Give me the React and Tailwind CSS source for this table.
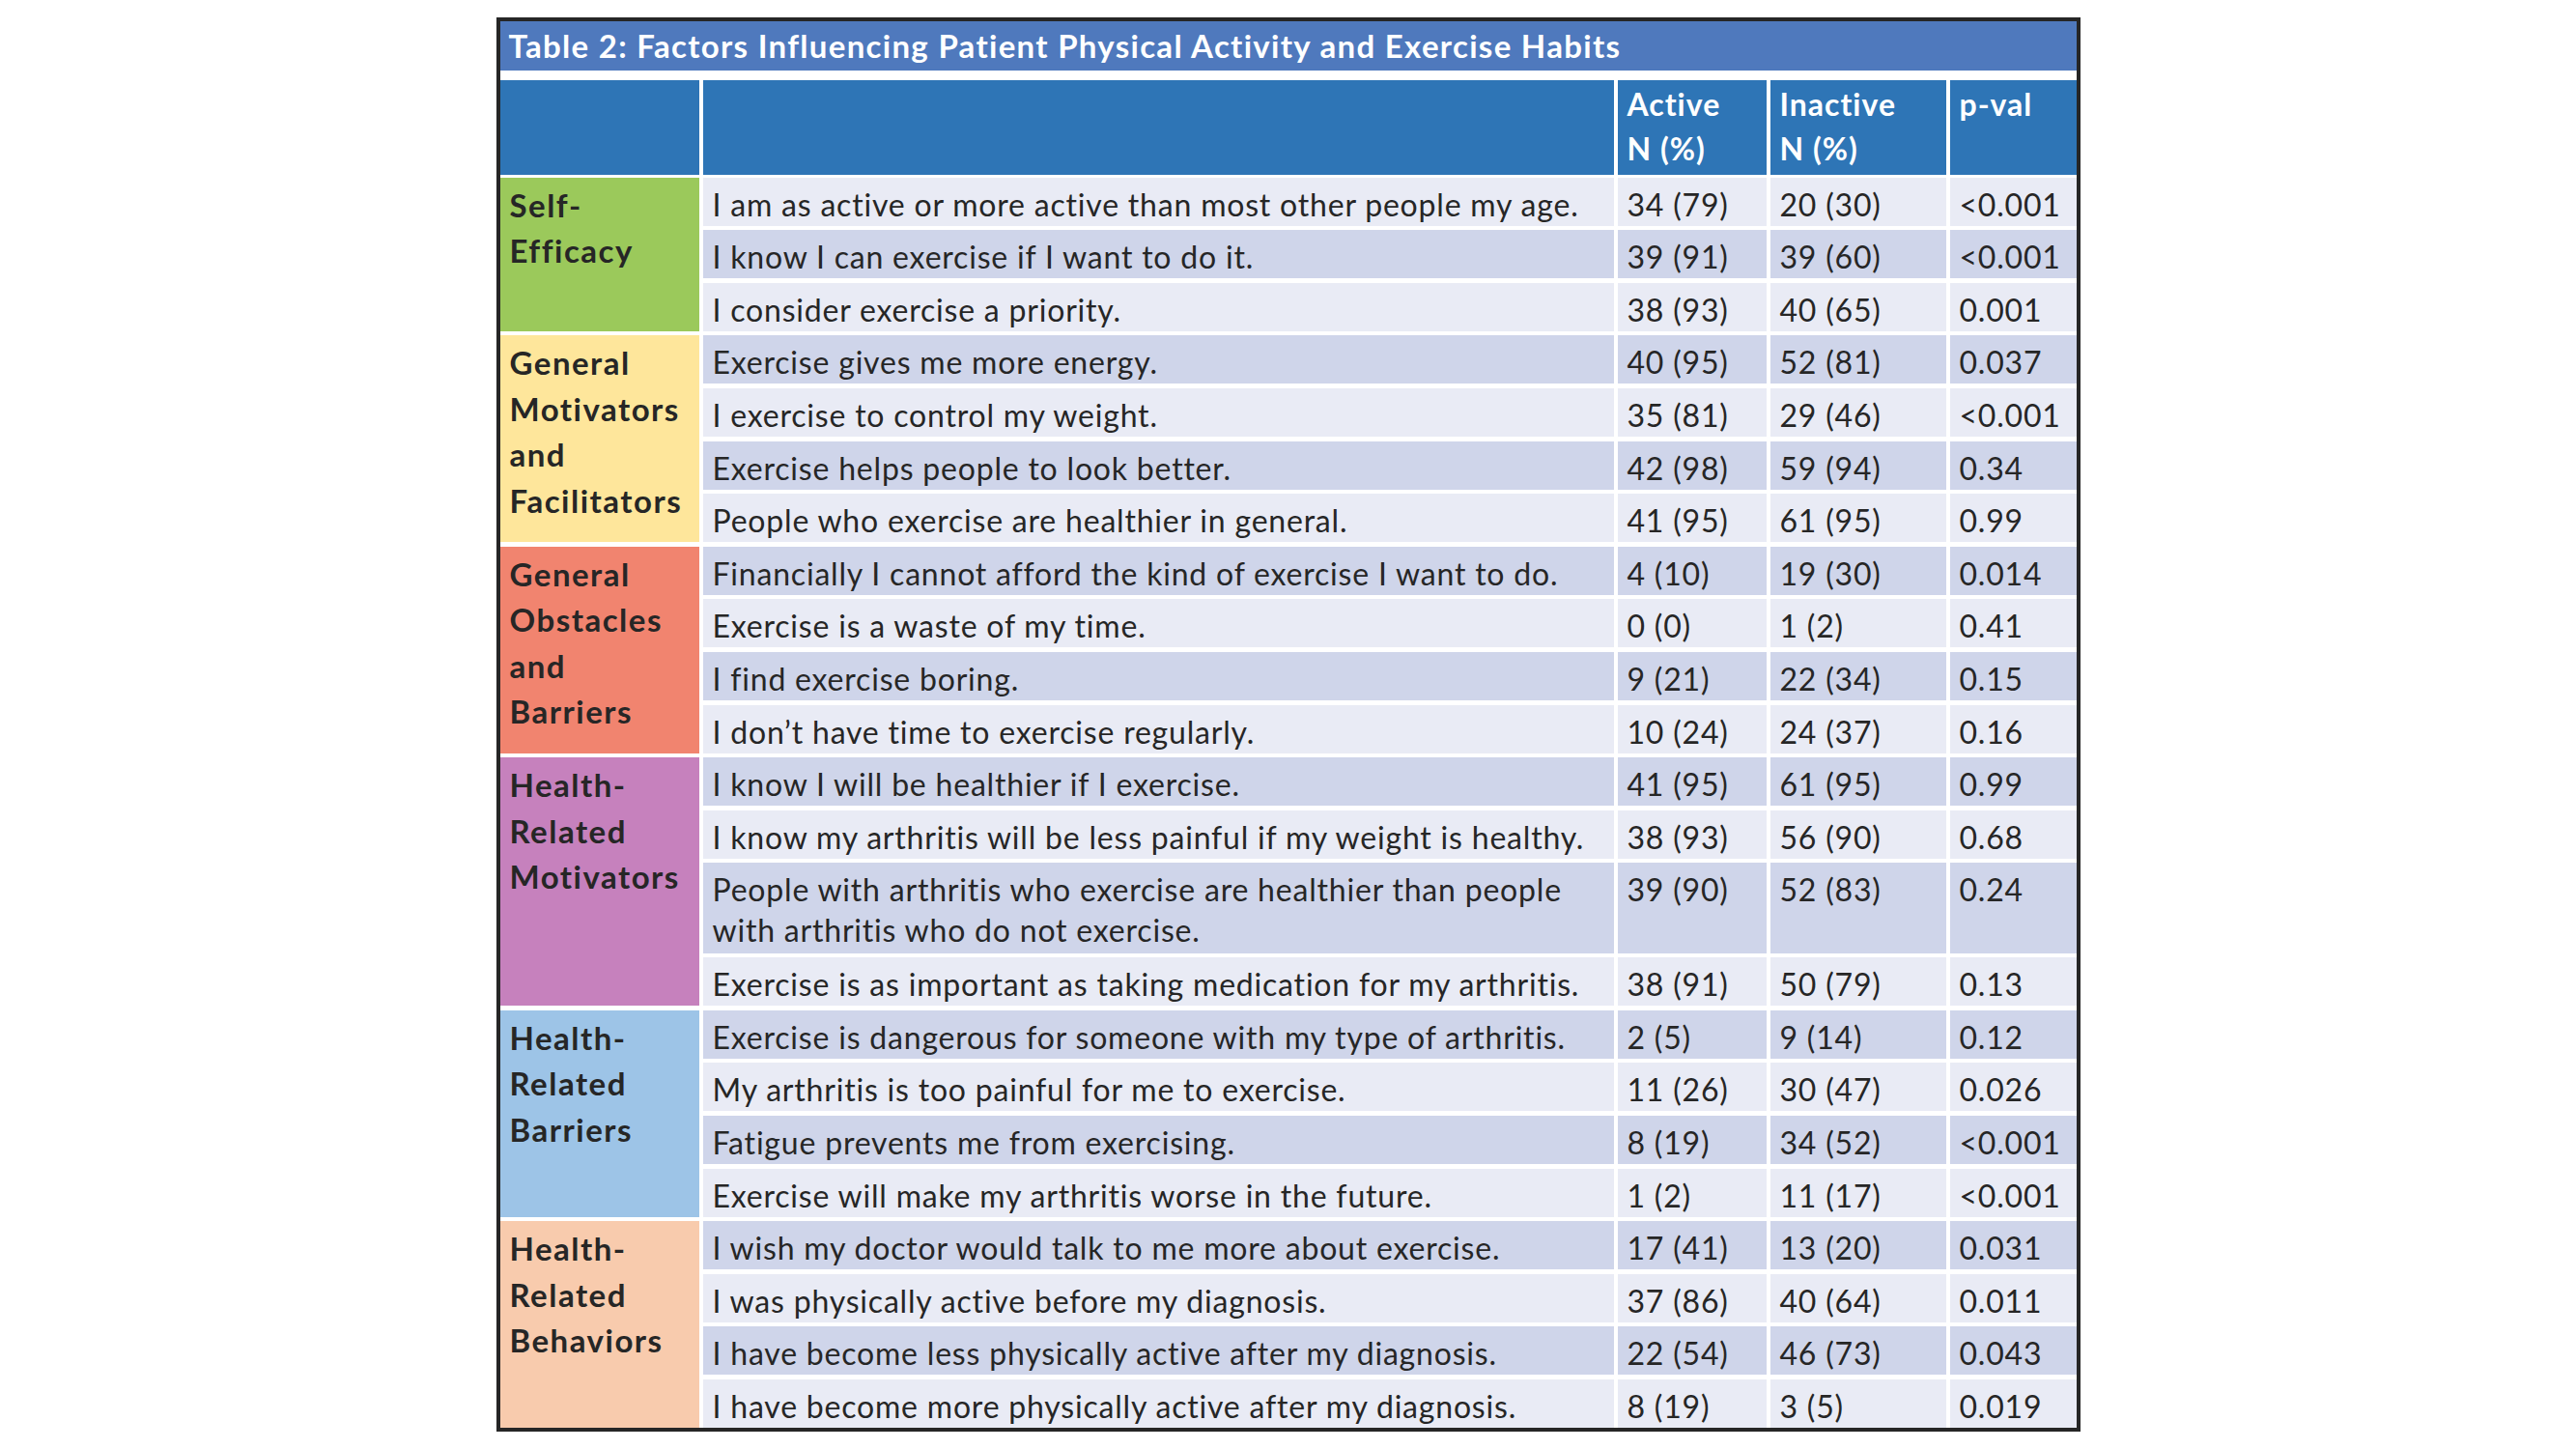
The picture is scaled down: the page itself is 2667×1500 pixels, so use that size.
import React from 'react';

const groups = [
  {
    label: ['Self-', 'Efficacy'],
    bg: 'bg-[#9bc95b]',
    span: 'row-span-3',
    rows: [
      ['I am as active or more active than most other people my age.', '34 (79)', '20 (30)', '<0.001'],
      ['I know I can exercise if I want to do it.', '39 (91)', '39 (60)', '<0.001'],
      ['I consider exercise a priority.', '38 (93)', '40 (65)', '0.001'],
    ],
  },
  {
    label: ['General', 'Motivators', 'and', 'Facilitators'],
    bg: 'bg-[#fee69b]',
    span: 'row-span-4',
    rows: [
      ['Exercise gives me more energy.', '40 (95)', '52 (81)', '0.037'],
      ['I exercise to control my weight.', '35 (81)', '29 (46)', '<0.001'],
      ['Exercise helps people to look better.', '42 (98)', '59 (94)', '0.34'],
      ['People who exercise are healthier in general.', '41 (95)', '61 (95)', '0.99'],
    ],
  },
  {
    label: ['General', 'Obstacles', 'and', 'Barriers'],
    bg: 'bg-[#f1846f]',
    span: 'row-span-4',
    rows: [
      ['Financially I cannot afford the kind of exercise I want to do.', '4 (10)', '19 (30)', '0.014'],
      ['Exercise is a waste of my time.', '0 (0)', '1 (2)', '0.41'],
      ['I find exercise boring.', '9 (21)', '22 (34)', '0.15'],
      ['I don\u2019t have time to exercise regularly.', '10 (24)', '24 (37)', '0.16'],
    ],
  },
  {
    label: ['Health-', 'Related', 'Motivators'],
    bg: 'bg-[#c681bd]',
    span: 'row-span-4',
    rows: [
      ['I know I will be healthier if I exercise.', '41 (95)', '61 (95)', '0.99'],
      ['I know my arthritis will be less painful if my weight is healthy.', '38 (93)', '56 (90)', '0.68'],
      [['People with arthritis who exercise are healthier than people', 'with arthritis who do not exercise.'], '39 (90)', '52 (83)', '0.24'],
      ['Exercise is as important as taking medication for my arthritis.', '38 (91)', '50 (79)', '0.13'],
    ],
  },
  {
    label: ['Health-', 'Related', 'Barriers'],
    bg: 'bg-[#9dc4e7]',
    span: 'row-span-4',
    rows: [
      ['Exercise is dangerous for someone with my type of arthritis.', '2 (5)', '9 (14)', '0.12'],
      ['My arthritis is too painful for me to exercise.', '11 (26)', '30 (47)', '0.026'],
      ['Fatigue prevents me from exercising.', '8 (19)', '34 (52)', '<0.001'],
      ['Exercise will make my arthritis worse in the future.', '1 (2)', '11 (17)', '<0.001'],
    ],
  },
  {
    label: ['Health-', 'Related', 'Behaviors'],
    bg: 'bg-[#f8cbad]',
    span: 'row-span-4',
    rows: [
      ['I wish my doctor would talk to me more about exercise.', '17 (41)', '13 (20)', '0.031'],
      ['I was physically active before my diagnosis.', '37 (86)', '40 (64)', '0.011'],
      ['I have become less physically active after my diagnosis.', '22 (54)', '46 (73)', '0.043'],
      ['I have become more physically active after my diagnosis.', '8 (19)', '3 (5)', '0.019'],
    ],
  },
];

const cols = 'grid grid-cols-[206px_943px_154px_182px_131px] gap-x-[4px]';
const headCell = 'bg-[#2e75b6] pl-[10px] pt-[2px] text-[32px] leading-[46px] font-bold tracking-[1px] text-white';

const App = () => {
  let rowIndex = 0;

  return (
    <div className="w-[2667px] h-[1500px] bg-white pt-[18px] [font-family:Lato,sans-serif]">
      <div className="mx-auto w-[1640px] border-[4px] border-[#262626] bg-white">
        <div className="h-[51px] bg-[#4f79bd] pl-[9px] pt-[4px] text-[33px] leading-[42px] font-bold tracking-[1.3px] text-white whitespace-nowrap">
          Table 2: Factors Influencing Patient Physical Activity and Exercise Habits
        </div>

        {/* header row */}
        <div className={`${cols} mt-[10px] h-[98px]`}>
          <div className="bg-[#2e75b6]" />
          <div className="bg-[#2e75b6]" />
          <div className={headCell}>
            Active<br />N (%)
          </div>
          <div className={headCell}>
            Inactive<br />N (%)
          </div>
          <div className={headCell}>p-val</div>
        </div>

        {/* body */}
        <div className={`${cols} gap-y-[4.6px] mt-[2.6px] text-[32px] text-[#262626]`}>
          {groups.map((group) => (
            <React.Fragment key={group.label.join(' ')}>
              <div className={`${group.span} ${group.bg} pl-[10px] pt-[5px] text-[33px] leading-[47.5px] font-bold tracking-[1.5px]`}>
                {group.label.map((line) => (
                  <div key={line}>{line}</div>
                ))}
              </div>
              {group.rows.map((row) => {
                const shade = rowIndex % 2 === 1 ? 'bg-[#cfd5ea]' : 'bg-[#e9ebf5]';
                rowIndex += 1;
                const tall = Array.isArray(row[0]);
                const cell = `${shade} pl-[10px] pt-[7px] leading-[42px] tracking-[0.8px] whitespace-nowrap ${tall ? 'h-[93.4px]' : 'h-[50px]'}`;
                return (
                  <React.Fragment key={tall ? row[0][0] : row[0]}>
                    <div className={cell}>
                      {tall ? (
                        <>
                          {row[0][0]}
                          <br />
                          {row[0][1]}
                        </>
                      ) : (
                        row[0]
                      )}
                    </div>
                    <div className={cell}>{row[1]}</div>
                    <div className={cell}>{row[2]}</div>
                    <div className={cell}>{row[3]}</div>
                  </React.Fragment>
                );
              })}
            </React.Fragment>
          ))}
        </div>
      </div>
    </div>
  );
};

export default App;
